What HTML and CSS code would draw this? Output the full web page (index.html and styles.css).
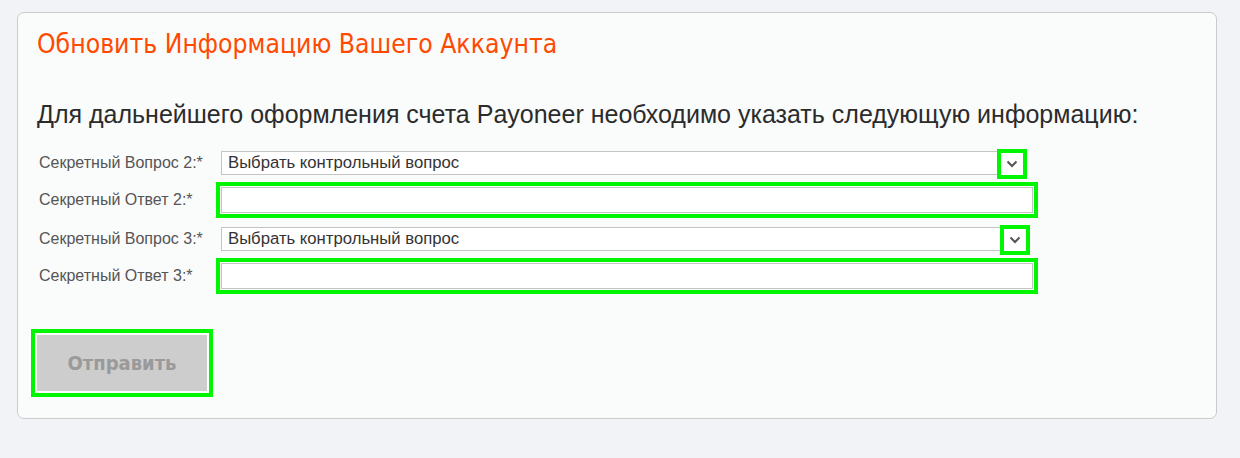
FILE: index.html
```html
<!DOCTYPE html>
<html lang="ru">
<head>
<meta charset="utf-8">
<title>Обновить Информацию Вашего Аккаунта</title>
<link rel="stylesheet" href="styles.css">
</head>
<body>
<div class="card">
  <h1 class="title">Обновить Информацию Вашего Аккаунта</h1>
  <p class="lead">Для дальнейшего оформления счета Payoneer необходимо указать следующую информацию:</p>
  <div class="form">
    <div class="row row-select">
      <label class="label">Секретный Вопрос 2:*</label>
      <div class="select select-a">
        <span class="select-text">Выбрать контрольный вопрос</span>
        <span class="arrow"><svg width="12" height="8" viewBox="0 0 12 8"><path d="M1.5 1.5 L6 6 L10.5 1.5" fill="none" stroke="#555" stroke-width="2"/></svg></span>
      </div>
    </div>
    <div class="row row-input">
      <label class="label">Секретный Ответ 2:*</label>
      <div class="input"></div>
    </div>
    <div class="row row-select">
      <label class="label">Секретный Вопрос 3:*</label>
      <div class="select select-b">
        <span class="select-text">Выбрать контрольный вопрос</span>
        <span class="arrow"><svg width="12" height="8" viewBox="0 0 12 8"><path d="M1.5 1.5 L6 6 L10.5 1.5" fill="none" stroke="#555" stroke-width="2"/></svg></span>
      </div>
    </div>
    <div class="row row-input">
      <label class="label">Секретный Ответ 3:*</label>
      <div class="input"></div>
    </div>
  </div>
  <div class="actions">
    <button class="submit" type="button">Отправить</button>
  </div>
</div>
</body>
</html>
```
FILE: styles.css
```css
html, body {
  margin: 0;
  padding: 0;
}
body {
  background: #f2f3f7;
  font-family: "Liberation Sans", Arial, sans-serif;
  color: #333;
}
.card {
  box-sizing: border-box;
  margin: 12px 0 0 17px;
  width: 1200px;
  height: 407px;
  background: #fafbfb;
  border: 1px solid #c9cacc;
  border-radius: 7px;
  padding: 16px 0 0 19px;
}
.title {
  margin: 0;
  font-family: "DejaVu Sans Condensed", "DejaVu Sans", sans-serif;
  font-weight: normal;
  font-size: 26.3px;
  line-height: 30px;
  color: #ff4a00;
}
.lead {
  margin: 40px 0 0 0;
  font-size: 25px;
  line-height: 30px;
  color: #2b2b2b;
}
.form {
  margin-top: 22px;
  padding-left: 2px;
  display: flex;
  flex-direction: column;
}
.row {
  display: flex;
  align-items: center;
}
.row-select {
  height: 24px;
}
.row-input {
  height: 26px;
  margin-top: 12px;
  margin-bottom: 14px;
}
.label {
  width: 182px;
  flex: none;
  font-size: 16px;
  color: #555;
}
.select {
  position: relative;
  box-sizing: border-box;
  height: 24px;
  border: 1px solid #c4c4c4;
  background: #fff;
  display: flex;
  align-items: center;
  padding-left: 6px;
}
.select-a { width: 803px; }
.select-b { width: 806px; }
.select-text {
  font-size: 16.7px;
  color: #333;
}
.arrow {
  position: absolute;
  right: -4px;
  top: -3px;
  box-sizing: border-box;
  width: 30px;
  height: 30px;
  border: 4px solid #00f500;
  background: #fff;
  display: flex;
  align-items: center;
  justify-content: center;
}
.arrow svg {
  display: block;
}
.input {
  box-sizing: border-box;
  width: 812px;
  height: 26px;
  border: 1px solid #c4c4c4;
  background: #fff;
  outline: 4px solid #00f500;
  outline-offset: 1px;
}
.actions {
  margin-top: 32px;
}
.submit {
  box-sizing: border-box;
  width: 170px;
  height: 56px;
  border: none;
  background: #cdcdcd;
  color: #9a9a9a;
  font-family: "DejaVu Sans Condensed", "DejaVu Sans", sans-serif;
  font-weight: bold;
  font-size: 20px;
  outline: 4px solid #00f500;
  outline-offset: 2px;
  padding: 0;
}
```
